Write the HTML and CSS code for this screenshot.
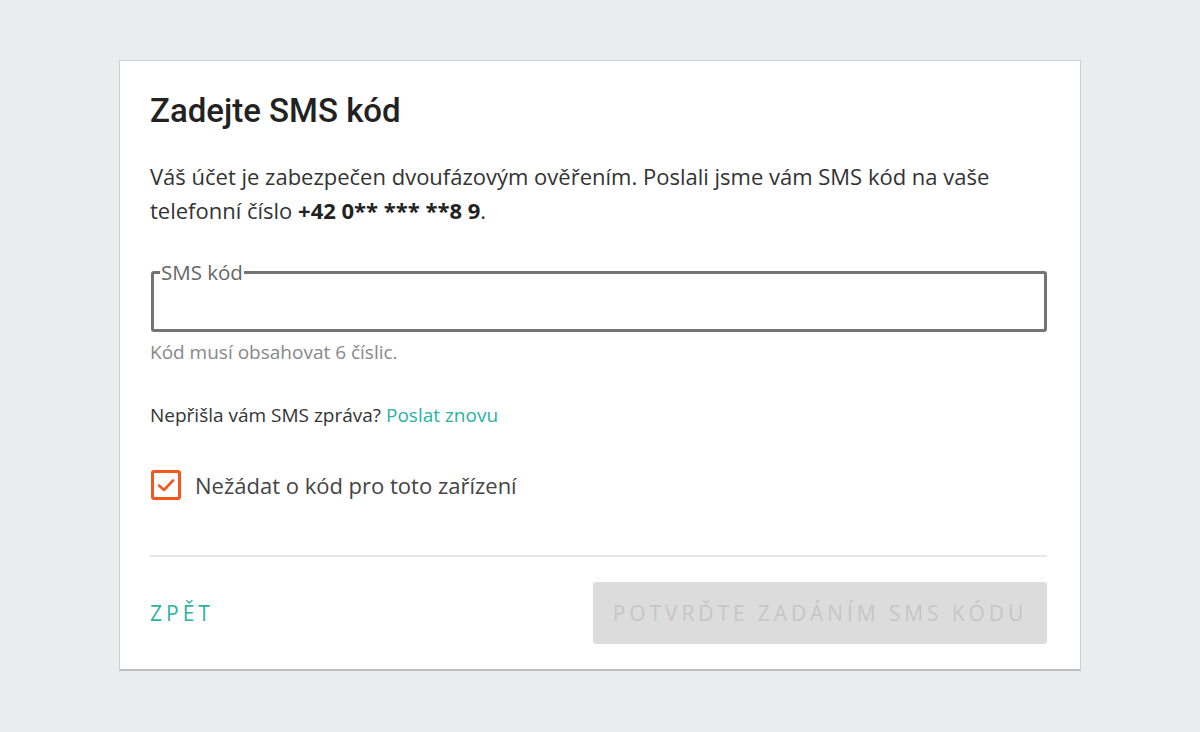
FILE: index.html
```html
<!DOCTYPE html>
<html>
<head>
<meta charset="utf-8"/>
<title>Zadejte SMS kód</title>
<link rel="stylesheet" href="styles.css">
</head>
<body>
<div class="card">
  <h1 class="title">Zadejte SMS kód</h1>
  <p class="lead">Váš účet je zabezpečen dvoufázovým ověřením. Poslali jsme vám SMS kód na vaše telefonní číslo <b>+42 0** *** **8 9</b>.</p>

  <fieldset class="field">
    <legend>SMS kód</legend>
    <input type="text" class="field-input">
  </fieldset>
  <div class="hint">Kód musí obsahovat 6 číslic.</div>

  <div class="resend">Nepřišla vám SMS zpráva? <a href="#">Poslat znovu</a></div>

  <label class="check">
    <span class="box">
      <svg width="20" height="16" viewBox="0 0 20 16"><path d="M3 8.5 L8 13 L17 3.5" fill="none" stroke="#f4581f" stroke-width="2.6" stroke-linecap="round" stroke-linejoin="round"/></svg>
    </span>
    <span>Nežádat o kód pro toto zařízení</span>
  </label>

  <div class="footer">
    <a href="#" class="back">ZPĚT</a>
    <button class="submit" disabled>POTVRĎTE ZADÁNÍM SMS KÓDU</button>
  </div>
</div>
</body>
</html>
```

FILE: styles.css
```css
body {
  margin: 0;
  background-color: #e9edf0;
  font-family: "Open Sans", sans-serif;
  color: #333;
}

.card {
  width: 897px;
  margin: 60px 0 0 119px;
  padding: 0 33px 25px 30px;
  background: white;
  border: 1px solid #cfcfcf;
  border-bottom: 2px solid #bdbdbd;
}

.title {
  margin: 0;
  padding-top: 30px;
  font-family: Roboto, sans-serif;
  font-weight: 500;
  font-size: 33px;
  line-height: 40px;
  color: #222;
}

.lead {
  margin: 28px 0 0;
  font-size: 22px;
  line-height: 34px;
  color: #333;
}

.lead b {
  font-weight: 700;
  color: #222;
}

.field {
  box-sizing: border-box;
  margin: 35px 0 0 1px;
  padding: 0 10px;
  height: 70px;
  border: 3px solid #747474;
  border-radius: 3px;
}

.field legend {
  padding: 0 1px;
  margin-left: -4px;
  font-size: 20.5px;
  line-height: 20px;
  color: #666;
}

.field-input {
  border: none;
  outline: none;
  width: 100%;
  height: 40px;
  font-size: 19px;
  font-family: "Open Sans", sans-serif;
}

.hint {
  margin-top: 8px;
  font-size: 19px;
  line-height: 24px;
  color: #888;
}

.resend {
  margin-top: 39px;
  font-size: 19px;
  line-height: 24px;
  color: #333;
}

.resend a {
  color: #2bb3a0;
  text-decoration: none;
}

.check {
  display: flex;
  align-items: center;
  gap: 14px;
  margin: 43px 0 0 1px;
  font-size: 22px;
  line-height: 30px;
  color: #444;
}

.box {
  width: 24px;
  height: 24px;
  border: 3px solid #f4581f;
  border-radius: 3px;
  display: flex;
  align-items: center;
  justify-content: center;
}

.footer {
  margin-top: 55px;
  padding-top: 25px;
  border-top: 2px solid #e8e8e8;
  display: flex;
  align-items: center;
  justify-content: space-between;
}

.back {
  font-size: 21px;
  letter-spacing: 4px;
  color: #2bb3a0;
  text-decoration: none;
}

.submit {
  width: 454px;
  height: 62px;
  border: none;
  border-radius: 3px;
  background: #dcdcdc;
  color: #c6c6c6;
  font-family: "Open Sans", sans-serif;
  font-size: 21px;
  letter-spacing: 3.9px;
}
```
